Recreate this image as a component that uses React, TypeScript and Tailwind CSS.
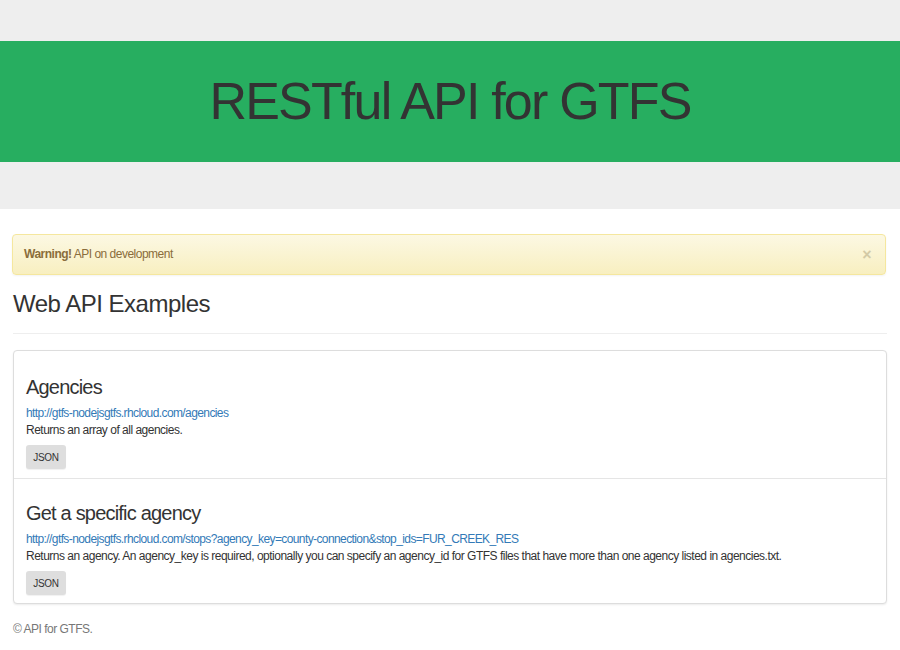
const endpoints = [
  {
    title: "Agencies",
    url: "http://gtfs-nodejsgtfs.rhcloud.com/agencies",
    desc: "Returns an array of all agencies.",
  },
  {
    title: "Get a specific agency",
    url: "http://gtfs-nodejsgtfs.rhcloud.com/stops?agency_key=county-connection&stop_ids=FUR_CREEK_RES",
    desc: "Returns an agency. An agency_key is required, optionally you can specify an agency_id for GTFS files that have more than one agency listed in agencies.txt.",
  },
];

export default function App() {
  return (
    <div className="min-h-[650px] bg-white text-[12px] leading-[17px] tracking-[-0.5px] text-[#333] font-['Liberation_Sans',Arial,sans-serif]">
      {/* jumbotron */}
      <div className="bg-[#eeeeee] pt-[41px] pb-[47px]">
        <div className="h-[121px] bg-[#27ae60] flex items-center justify-center">
          <h1 className="text-[52px] leading-none tracking-[-1.8px] text-[#333] pb-[2px]">RESTful API for GTFS</h1>
        </div>
      </div>

      <div className="px-[13px] pt-[25px]">
        <div className="ml-[-1px] mr-[1px] flex items-center justify-between h-[41px] px-[11px] rounded-[4px] border border-[#f5e79e] bg-gradient-to-b from-[#fcf8e3] to-[#f8efc0] text-[#8a6d3b] shadow-[0_1px_2px_rgba(0,0,0,0.05)]">
          <span>
            <strong className="font-bold">Warning!</strong> API on development
          </span>
          <span className="text-[16px] leading-none font-bold text-[#d3caa6] mr-[3px]">×</span>
        </div>

        <h2 className="mt-[15px] text-[24px] leading-[27px] tracking-[-0.5px] text-[#333]">Web API Examples</h2>
        <div className="mt-[16px] h-px bg-[#eeeeee]" />

        <div className="mt-[16px] rounded-[4px] border border-[#dddddd] bg-white shadow-[0_1px_2px_rgba(0,0,0,0.08)]">
          {endpoints.map((ep, i) => (
            <div
              key={ep.title}
              className={
                i === 0
                  ? "px-[12px] pt-[25px] pb-[9px] border-b border-[#e5e5e5]"
                  : "px-[12px] pt-[23px] pb-[8px]"
              }
            >
              <h3 className="text-[20px] leading-[22px] tracking-[-0.8px] text-[#333]">{ep.title}</h3>
              <a className="block mt-[7px] tracking-[-0.6px] text-[#337ab7]" href="#">
                {ep.url}
              </a>
              <p>{ep.desc}</p>
              <button className="mt-[6px] h-[24px] w-[40px] rounded-[3px] bg-[#dedede] text-[10px] tracking-[-0.3px] text-[#333] shadow-[0_1px_1px_rgba(0,0,0,0.06)]">
                JSON
              </button>
            </div>
          ))}
        </div>

        <p className="mt-[17px] text-[#777]">© API for GTFS.</p>
      </div>
    </div>
  );
}
